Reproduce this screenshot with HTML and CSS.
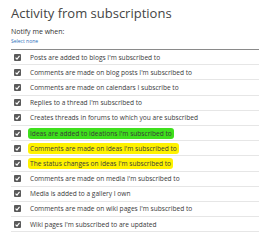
FILE: index.html
```html
<!DOCTYPE html>
<html lang="en">
<head>
    <meta charset="UTF-8">
    <title>Activity from subscriptions</title>
    <link rel="stylesheet" href="styles.css">
</head>
<body>

    <div class="panel">
        <h2>Activity from subscriptions</h2>

        <div class="notify">Notify me when:</div>
        <a class="select-none" href="#">Select none</a>

        <ul class="options">
            <li><span class="box"><svg viewBox="0 0 8 8"><path d="M1.8 4.2 L3.4 5.8 L6.3 2.2"/></svg></span><span>Posts are added to blogs I'm subscribed to</span></li>
            <li><span class="box"><svg viewBox="0 0 8 8"><path d="M1.8 4.2 L3.4 5.8 L6.3 2.2"/></svg></span><span>Comments are made on blog posts I'm subscribed to</span></li>
            <li><span class="box"><svg viewBox="0 0 8 8"><path d="M1.8 4.2 L3.4 5.8 L6.3 2.2"/></svg></span><span>Comments are made on calendars I subscribe to</span></li>
            <li><span class="box"><svg viewBox="0 0 8 8"><path d="M1.8 4.2 L3.4 5.8 L6.3 2.2"/></svg></span><span>Replies to a thread I'm subscribed to</span></li>
            <li><span class="box"><svg viewBox="0 0 8 8"><path d="M1.8 4.2 L3.4 5.8 L6.3 2.2"/></svg></span><span>Creates threads in forums to which you are subscribed</span></li>
            <li><span class="box"><svg viewBox="0 0 8 8"><path d="M1.8 4.2 L3.4 5.8 L6.3 2.2"/></svg></span><span class="mark green">Ideas are added to ideations I'm subscribed to</span></li>
            <li><span class="box"><svg viewBox="0 0 8 8"><path d="M1.8 4.2 L3.4 5.8 L6.3 2.2"/></svg></span><span class="mark yellow">Comments are made on ideas I'm subscribed to</span></li>
            <li><span class="box"><svg viewBox="0 0 8 8"><path d="M1.8 4.2 L3.4 5.8 L6.3 2.2"/></svg></span><span class="mark yellow">The status changes on ideas I'm subscribed to</span></li>
            <li><span class="box"><svg viewBox="0 0 8 8"><path d="M1.8 4.2 L3.4 5.8 L6.3 2.2"/></svg></span><span>Comments are made on media I'm subscribed to</span></li>
            <li><span class="box"><svg viewBox="0 0 8 8"><path d="M1.8 4.2 L3.4 5.8 L6.3 2.2"/></svg></span><span>Media is added to a gallery I own</span></li>
            <li><span class="box"><svg viewBox="0 0 8 8"><path d="M1.8 4.2 L3.4 5.8 L6.3 2.2"/></svg></span><span>Comments are made on wiki pages I'm subscribed to</span></li>
            <li><span class="box"><svg viewBox="0 0 8 8"><path d="M1.8 4.2 L3.4 5.8 L6.3 2.2"/></svg></span><span>Wiki pages I'm subscribed to are updated</span></li>
        </ul>
    </div>

</body>
</html>
```

FILE: styles.css
```css
body {
    font-family: "Open Sans", Arial, sans-serif;
    background-color: white;
    color: #333;
    margin: 0;
    padding: 0;
}
.panel {
    padding: 4px 0 0 11px;
}
h2 {
    font-size: 13px;
    font-weight: normal;
    color: #444;
    margin: 0;
    line-height: 18px;
}
.notify {
    font-size: 7px;
    color: #333;
    margin-top: 5px;
    line-height: 10px;
}
.select-none {
    display: block;
    font-size: 5px;
    color: #2a6ebb;
    text-decoration: none;
    line-height: 8px;
}
.options {
    list-style: none;
    margin: 4px 0 0 0;
    padding: 0;
    border-top: 1px solid #8a8a8a;
}
.options li {
    display: flex;
    align-items: center;
    height: 14.2px;
    border-bottom: 1px solid #e6e6e6;
    font-size: 6.6px;
    color: #3a3a3a;
    white-space: nowrap;
}
.box {
    width: 7px;
    height: 7px;
    margin: 0 9px 0 3px;
    background-color: #5a5a5a;
    border-radius: 1px;
    display: flex;
}
.box svg {
    width: 7px;
    height: 7px;
    fill: none;
    stroke: white;
    stroke-width: 1.3;
}
.mark {
    padding: 1px 2px;
    margin-left: -2px;
    border-radius: 3px;
}
.green {
    background-color: #3ee01c;
}
.yellow {
    background-color: #fff200;
}
```
